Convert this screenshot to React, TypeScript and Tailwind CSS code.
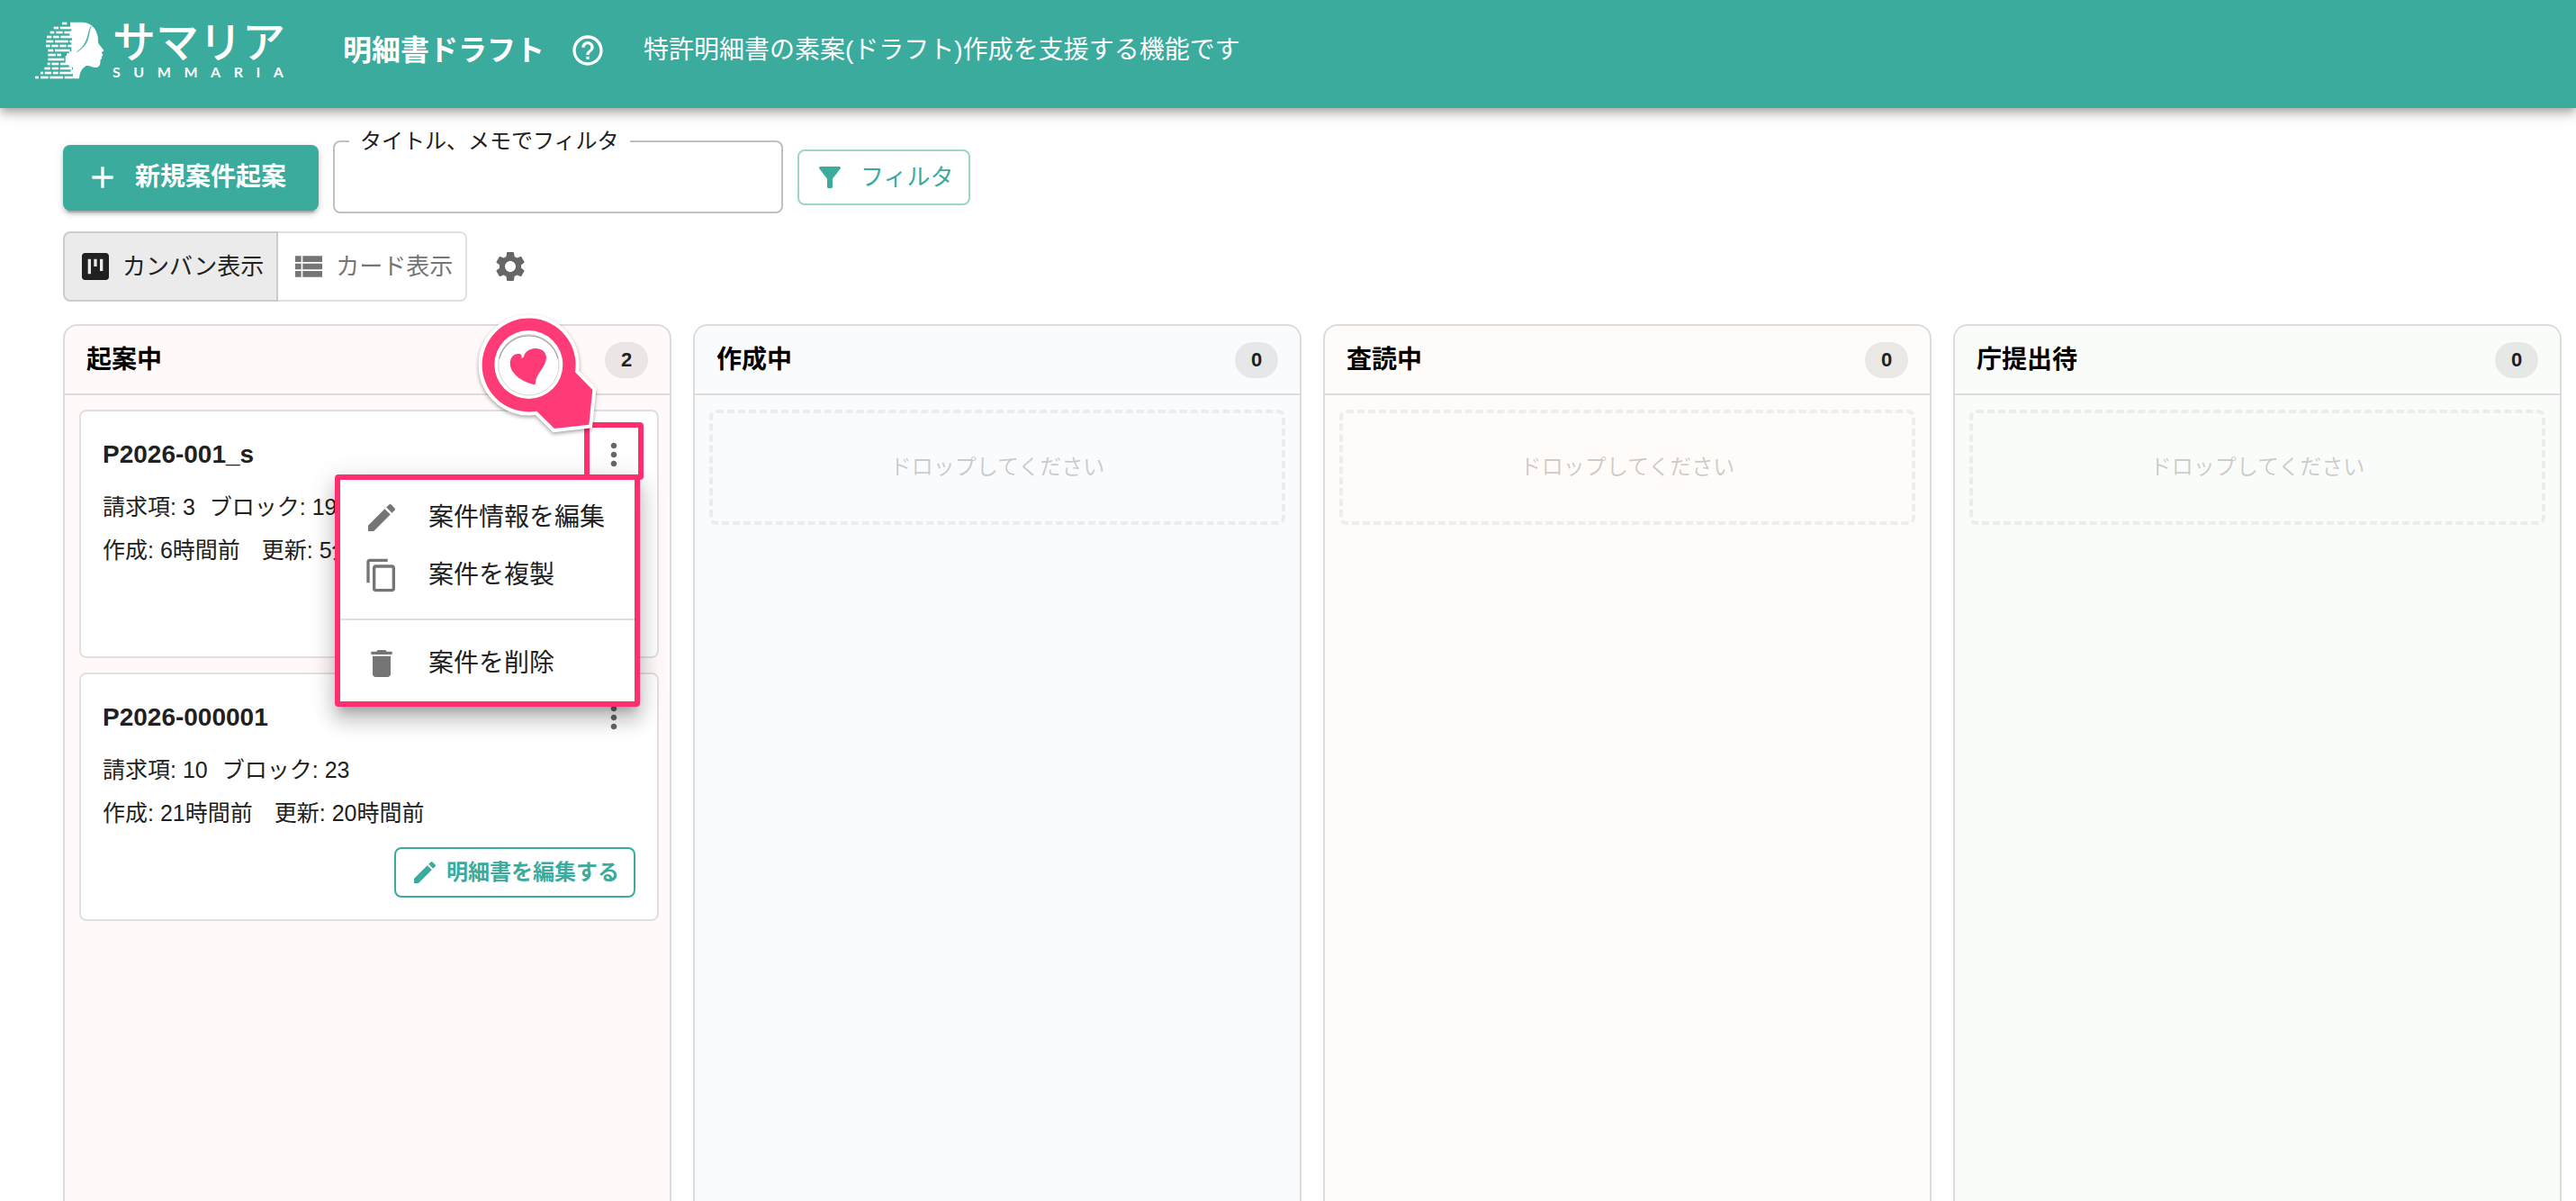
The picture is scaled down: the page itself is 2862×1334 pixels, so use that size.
import { useState } from "react";
import {
  MdAdd,
  MdContentCopy,
  MdDelete,
  MdEdit,
  MdFilterAlt,
  MdHelpOutline,
  MdMoreVert,
  MdSettings,
  MdViewKanban,
  MdViewList,
} from "react-icons/md";

type Case = {
  id: string;
  claims: number;
  blocks: number;
  created: string;
  updated: string;
  menuOpen?: boolean;
};

type Column = {
  title: string;
  tone: string;
  cases: Case[];
};

const COLUMNS: Column[] = [
  {
    title: "起案中",
    tone: "bg-[#fff9f9]",
    cases: [
      {
        id: "P2026-001_s",
        claims: 3,
        blocks: 19,
        created: "6時間前",
        updated: "5分前",
        menuOpen: true,
      },
      {
        id: "P2026-000001",
        claims: 10,
        blocks: 23,
        created: "21時間前",
        updated: "20時間前",
      },
    ],
  },
  { title: "作成中", tone: "bg-[#fafbfd]", cases: [] },
  { title: "査読中", tone: "bg-[#fffbf8]", cases: [] },
  { title: "庁提出待", tone: "bg-[#fafcfa]", cases: [] },
];

// [x, y, width] of the bricks that make up the back of the head
const BRICKS = [
  [207, 74, 16],
  [179, 89, 16],
  [200, 89, 40],
  [167, 104, 14],
  [187, 104, 22],
  [214, 104, 26],
  [156, 119, 16],
  [177, 119, 20],
  [202, 119, 40],
  [154, 134, 24],
  [183, 134, 44],
  [153, 149, 14],
  [172, 149, 22],
  [199, 149, 22],
  [226, 149, 16],
  [160, 164, 18],
  [183, 164, 50],
  [160, 179, 26],
  [190, 179, 14],
  [160, 194, 54],
  [158, 209, 9],
  [172, 209, 24],
  [201, 209, 30],
  [148, 224, 20],
  [173, 224, 22],
  [200, 224, 40],
  [135, 239, 9],
  [149, 239, 22],
  [176, 239, 18],
  [199, 239, 42],
  [117, 254, 12],
  [135, 254, 26],
  [166, 254, 44],
  [215, 254, 22],
];

function LogoMark() {
  return (
    <svg viewBox="111 69 240 198" className="h-[66px] w-20" aria-hidden="true">
      <g fill="#fff">
        {BRICKS.map(([x, y, w]) => (
          <rect key={`${x}-${y}`} x={x} y={y} width={w} height={8} />
        ))}
        <path d="M234 74H270C302 74 320 92 326 122C327 131 326 137 328 144C333 153 342 161 346 168C346 172 339 172 339 175C339 179 343 181 343 184L338 189L340 194L334 200C336 208 334 222 322 225C308 226 298 217 288 219C274 226 266 240 264 262H236V254H243V246H236V232H243V224H230V216H218V186H222V178H230V172H238V142H232V134H240V119H232V104H238V89H234Z" />
      </g>
      <path
        d="M304 87C294 100 296 118 286 138C279 153 269 164 256 173C272 164 284 152 291 136C298 118 296 104 304 87Z"
        fill="#3aab9c"
        stroke="#3aab9c"
        strokeWidth="1.5"
      />
    </svg>
  );
}

function Header() {
  return (
    <header className="relative z-10 flex h-[120px] items-center bg-[#3aab9c] pb-2 pl-[37px] text-white shadow-[0_4px_8px_-2px_rgba(0,0,0,0.2),0_8px_10px_rgba(0,0,0,0.14),0_2px_20px_rgba(0,0,0,0.12)]">
      <a href="#" className="flex items-center" aria-label="サマリア SUMMARIA">
        <LogoMark />
        <span className="ml-2 flex w-[198px] flex-col">
          <span className="text-5xl leading-[48px] font-medium">サマリア</span>
          <span className="flex justify-between pr-2 font-[Lato] text-base leading-4 font-bold">
            {"SUMMARIA".split("").map((c, i) => (
              <span key={i}>{c}</span>
            ))}
          </span>
        </span>
      </a>
      <h1 className="ml-[58px] text-[32px] leading-10 font-bold">
        明細書ドラフト
      </h1>
      <button className="ml-7" aria-label="ヘルプ">
        <MdHelpOutline className="size-10" />
      </button>
      <p className="ml-[42px] text-[28px] leading-10">
        特許明細書の素案(ドラフト)作成を支援する機能です
      </p>
    </header>
  );
}

function Toolbar() {
  const [query, setQuery] = useState("");

  return (
    <div className="flex flex-col gap-5 pl-[70px]">
      <div className="flex items-center gap-4">
        <button className="flex h-[73px] items-center gap-4 rounded-lg bg-[#3aab9c] pr-9 pl-6 text-[28px] font-bold text-white shadow-[0_6px_2px_-4px_rgba(0,0,0,0.2),0_4px_4px_rgba(0,0,0,0.14),0_2px_10px_rgba(0,0,0,0.12)]">
          <MdAdd className="size-10" />
          新規案件起案
        </button>
        <fieldset className="-mt-3 h-[92px] w-[500px] rounded-lg border-2 border-[#c0c0c0]">
          <legend className="ml-4 px-3 text-2xl leading-6">
            <label htmlFor="filter">タイトル、メモでフィルタ</label>
          </legend>
          <input
            id="filter"
            type="text"
            value={query}
            onChange={(e) => setQuery(e.target.value)}
            className="h-14 w-full px-7 text-2xl outline-none"
          />
        </fieldset>
        <button className="flex h-[62px] items-center gap-4 rounded-lg border-2 border-[#9dd5cd] px-4 text-[26px] text-[#3aab9c]">
          <MdFilterAlt className="size-9" />
          フィルタ
        </button>
      </div>
      <div className="flex items-center">
        <div className="flex h-[78px] text-[26px]">
          <button className="flex items-center gap-2.5 rounded-l-lg border-2 border-[#cccccc] bg-[#ebebeb] px-3.5">
            <MdViewKanban className="size-10" />
            カンバン表示
          </button>
          <button className="flex items-center gap-2.5 rounded-r-lg border-2 border-l-0 border-[#e0e0e0] px-3.5 text-[#757575]">
            <MdViewList className="size-10" />
            カード表示
          </button>
        </div>
        <button className="ml-7 text-[#666666]" aria-label="設定">
          <MdSettings className="size-10" />
        </button>
      </div>
    </div>
  );
}

function HeartPin() {
  return (
    <svg
      viewBox="90 60 402 402"
      className="pointer-events-none absolute -top-[131px] -left-[128px] size-[134px] max-w-none drop-shadow-[0_2px_2px_rgba(0,0,0,0.35)]"
      aria-hidden="true"
    >
      <path
        d="M417 250L475 309L463 425L348 438L289 380A156 156 0 1 1 417 250Z"
        fill="#ff3b77"
        stroke="#fff"
        strokeWidth="24"
        strokeLinejoin="miter"
        paintOrder="stroke"
      />
      <circle cx="262" cy="225" r="114" fill="#fff" />
      <circle
        cx="262"
        cy="226"
        r="101"
        fill="#fff"
        stroke="#d4d4d4"
        strokeWidth="3"
      />
      <path
        d="M164 205A101 101 0 0 1 360 205"
        fill="none"
        stroke="#a8a8a8"
        strokeWidth="4"
      />
      <path
        d="M238 203C240 197 239 189 229 189C214 187 201 200 200 219C199 246 224 277 277 291C284 292 285 289 285 284C286 256 322 230 321 201C320 180 302 170 284 171C262 172 250 184 246 197C244 201 241 203 238 203Z"
        fill="#ff3b77"
      />
    </svg>
  );
}

function CaseMenu() {
  const item =
    "flex h-16 w-full items-center gap-8 pr-[33px] pl-[26px] text-[28px] whitespace-nowrap";

  return (
    <div
      role="menu"
      className="absolute top-[46px] -right-[5px] rounded-sm border-6 border-[#ff2f6d] bg-white py-2.5 shadow-[0_10px_10px_-6px_rgba(0,0,0,0.2),0_16px_20px_2px_rgba(0,0,0,0.14),0_6px_28px_4px_rgba(0,0,0,0.12)]"
    >
      <button role="menuitem" className={item}>
        <MdEdit className="size-10 text-[#757575]" />
        案件情報を編集
      </button>
      <button role="menuitem" className={item}>
        <MdContentCopy className="size-10 text-[#757575]" />
        案件を複製
      </button>
      <hr className="my-4 border-t-2 border-[#e0e0e0]" />
      <button role="menuitem" className={item}>
        <MdDelete className="size-10 text-[#757575]" />
        案件を削除
      </button>
    </div>
  );
}

function CaseCard({ item }: { item: Case }) {
  return (
    <article className="rounded-lg border-2 border-[#e0e0e0] bg-white p-6">
      <div className="flex h-12 items-center justify-between">
        <h3 className="text-[28px] font-bold">{item.id}</h3>
        <div className="relative size-12">
          <button
            className="flex size-12 items-center justify-center text-[#666666]"
            aria-label="メニュー"
          >
            <MdMoreVert className="size-10" />
          </button>
          {item.menuOpen && (
            <div className="absolute inset-0 z-20">
              <CaseMenu />
              <span className="pointer-events-none absolute -top-3 -left-[9px] h-16 w-[66px] rounded-sm border-6 border-[#ff2f6d]" />
              <HeartPin />
            </div>
          )}
        </div>
      </div>
      <div className="mt-4 flex flex-col gap-3 text-[25px] leading-9">
        <p className="flex gap-4">
          <span>請求項: {item.claims}</span>
          <span>ブロック: {item.blocks}</span>
        </p>
        <p className="flex gap-6">
          <span>作成: {item.created}</span>
          <span>更新: {item.updated}</span>
        </p>
      </div>
      <div className="mt-5 flex justify-end">
        <button className="flex h-14 items-center gap-2 rounded-lg border-2 border-[#3aab9c] px-4 text-2xl font-bold text-[#3aab9c]">
          <MdEdit className="size-8" />
          明細書を編集する
        </button>
      </div>
    </article>
  );
}

function KanbanColumn({ column }: { column: Column }) {
  return (
    <section
      className={`flex flex-col rounded-t-2xl border-2 border-b-0 border-[#dcdcdc] ${column.tone}`}
    >
      <div className="flex h-[77px] items-center justify-between border-b-2 border-[#dcdcdc] px-6">
        <h2 className="text-[28px] font-bold text-black">{column.title}</h2>
        <span className="flex h-10 w-12 items-center justify-center rounded-full bg-black/8 text-[22px] font-bold">
          {column.cases.length}
        </span>
      </div>
      {column.cases.length > 0 ? (
        <div className="flex flex-col gap-4 py-4 pr-3 pl-4">
          {column.cases.map((c) => (
            <CaseCard key={c.id} item={c} />
          ))}
        </div>
      ) : (
        <div className="p-4">
          <div className="flex h-32 items-center justify-center rounded-lg border-4 border-dashed border-black/6 text-2xl text-black/20">
            ドロップしてください
          </div>
        </div>
      )}
    </section>
  );
}

export default function App() {
  return (
    <div className="flex min-h-screen flex-col bg-white font-['Liberation_Sans','Noto_Sans_CJK_JP',sans-serif] text-[#212121]">
      <Header />
      <main className="flex flex-1 flex-col pt-[37px]">
        <Toolbar />
        <div className="mt-[25px] grid flex-1 grid-cols-4 gap-6 pr-4 pl-[70px]">
          {COLUMNS.map((column) => (
            <KanbanColumn key={column.title} column={column} />
          ))}
        </div>
      </main>
    </div>
  );
}
